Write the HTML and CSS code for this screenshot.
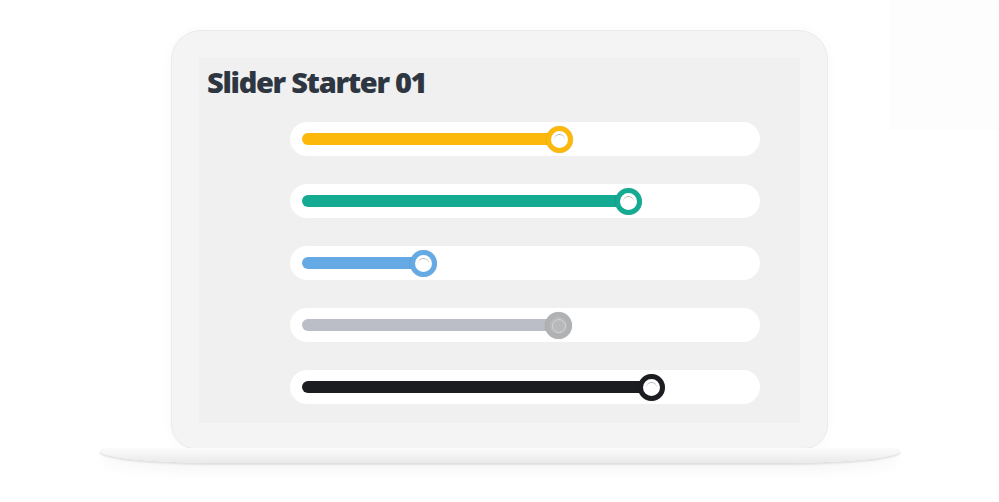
FILE: index.html
```html
<!DOCTYPE html>
<html lang="en">
<head>
<meta charset="utf-8">
<title>Slider Starter 01</title>
<link rel="stylesheet" href="styles.css">
</head>
<body>
<div class="ghost"></div>
<main class="page">
  <div class="lid">
    <section class="screen">
      <h1 class="title">Slider Starter 01</h1>
      <div class="sliders">
        <div class="track"><div class="rail"><div class="fill yellow" style="width:57.9%"><span class="thumb"></span></div></div></div>
        <div class="track"><div class="rail"><div class="fill teal" style="width:73.3%"><span class="thumb"></span></div></div></div>
        <div class="track"><div class="rail"><div class="fill blue" style="width:27.4%"><span class="thumb"></span></div></div></div>
        <div class="track"><div class="rail"><div class="fill gray" style="width:57.6%"><span class="thumb"></span></div></div></div>
        <div class="track"><div class="rail"><div class="fill black" style="width:78.5%"><span class="thumb"></span></div></div></div>
      </div>
    </section>
  </div>
  <div class="base"></div>
</main>
</body>
</html>
```
FILE: styles.css
```css
* { box-sizing: border-box; }
html, body { margin: 0; padding: 0; background: #ffffff; }
body { width: 999px; height: 502px; overflow: hidden; position: relative; font-family: Lato, "Noto Sans", sans-serif; }

.ghost {
  position: absolute; top: 0; right: 0;
  width: 110px; height: 130px;
  background: #fdfdfd;
}

.page {
  position: relative;
  display: flex; flex-direction: column; align-items: center;
  padding-top: 30px;
}

.lid {
  width: 657px; height: 419px;
  background: #f4f4f4;
  border: 1px solid #ebebeb;
  border-radius: 30px 30px 24px 24px;
  padding: 27px 27px 25px 27px;
  box-shadow: 0 0 12px rgba(0,0,0,0.03);
  display: flex;
}

.screen {
  flex: 1;
  background: #f0f0f0;
  padding: 6px 40px 0 8px;
  display: flex; flex-direction: column;
}

.title {
  margin: 0;
  font-family: "Open Sans", Lato, sans-serif;
  font-size: 29px;
  line-height: 36px;
  font-weight: 800;
  color: #2e3641;
  letter-spacing: -1.3px;
  white-space: nowrap;
}

.sliders {
  margin-top: 22px;
  margin-left: 83px;
  display: flex; flex-direction: column;
  gap: 28px;
}

.track {
  height: 34px;
  background: #ffffff;
  border-radius: 17px;
  padding: 0 12px;
  display: flex; align-items: center;
}

.rail { flex: 1; height: 12px; }

.fill {
  position: relative;
  height: 12px;
  border-radius: 6px;
}

.thumb {
  position: absolute;
  right: -13px; top: 50%;
  width: 27px; height: 27px;
  margin-top: -13.5px;
  border-radius: 50%;
  background: #ffffff;
  border: 5px solid currentColor;
  box-shadow: 0 0 1px rgba(0,0,0,0.25);
}
.thumb::after {
  content: "";
  position: absolute;
  left: 3px; top: 3px;
  width: 11px; height: 11px;
  border-radius: 50%;
  border-top: 1.5px solid #b3b3b3;
}

.yellow { background: #fdb90b; color: #fdb90b; }
.teal { background: #15ab93; color: #15ab93; }
.blue { background: #65a9e5; color: #65a9e5; }
.gray { background: #bbbec6; color: #b0b1b3; }
.black { background: #1b1d21; color: #1b1d21; }

.gray .thumb { background: #b8b9bb; }
.gray .thumb::after {
  border: 1.5px solid #d3d3d3;
  left: 2.5px; top: 2.5px; width: 12px; height: 12px;
}

.base {
  width: 800px; height: 15px;
  margin-top: -1px;
  background: linear-gradient(#fbfbfb 0%, #f6f6f6 35%, #e9e9e9 100%);
  border-radius: 3px 3px 120px 120px / 3px 3px 12px 12px;
  box-shadow: 0 2px 2px rgba(0,0,0,0.10), 0 8px 14px rgba(0,0,0,0.04);
}
```
